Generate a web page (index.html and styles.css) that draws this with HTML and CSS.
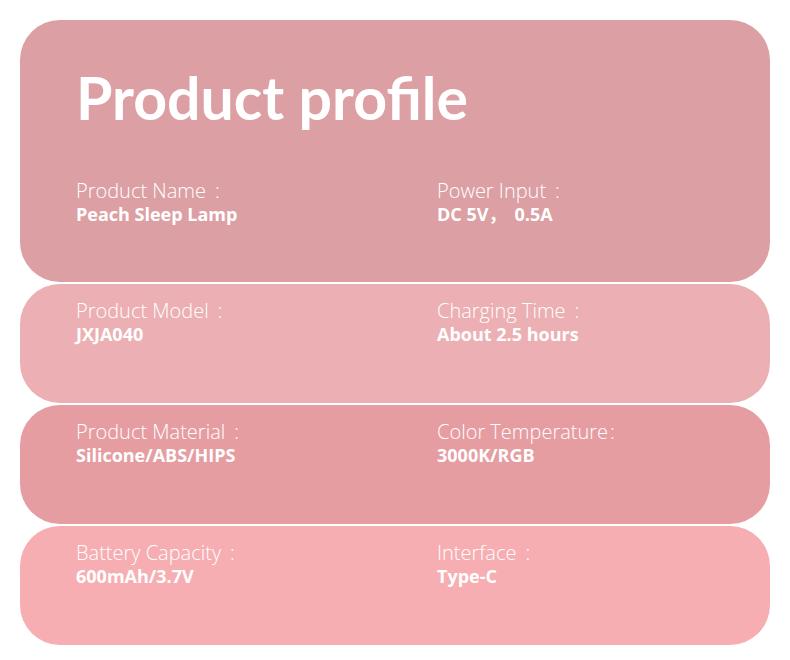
FILE: index.html
```html
<!DOCTYPE html>
<html>
<head>
<meta charset="utf-8">
<link rel="stylesheet" href="styles.css">
</head>
<body>
<div class="page">
  <section class="card card-1">
    <h1 class="title">Product profile</h1>
    <div class="row">
      <div class="item"><div class="label">Product Name<span class="c">:</span></div><div class="value">Peach Sleep Lamp</div></div>
      <div class="item"><div class="label">Power Input<span class="c">:</span></div><div class="value">DC 5V，<span class="gap">0.5A</span></div></div>
    </div>
  </section>
  <section class="card card-2">
    <div class="row">
      <div class="item"><div class="label">Product Model<span class="c">:</span></div><div class="value">JXJA040</div></div>
      <div class="item"><div class="label">Charging Time<span class="c">:</span></div><div class="value">About 2.5 hours</div></div>
    </div>
  </section>
  <section class="card card-3">
    <div class="row">
      <div class="item"><div class="label">Product Material<span class="c">:</span></div><div class="value">Silicone/ABS/HIPS</div></div>
      <div class="item"><div class="label">Color Temperature<span class="c tight">:</span></div><div class="value">3000K/RGB</div></div>
    </div>
  </section>
  <section class="card card-4">
    <div class="row">
      <div class="item"><div class="label">Battery Capacity<span class="c">:</span></div><div class="value">600mAh/3.7V</div></div>
      <div class="item"><div class="label">Interface<span class="c">:</span></div><div class="value">Type-C</div></div>
    </div>
  </section>
</div>
</body>
</html>
```
FILE: styles.css
```css
html, body { margin: 0; padding: 0; background: #fff; }
body { font-family: "Open Sans", "Noto Sans CJK SC", sans-serif; color: #fff; }
.page {
  width: 750px;
  padding: 20px;
  display: flex;
  flex-direction: column;
  gap: 2px;
}
.card {
  border-radius: 40px;
  height: 119px;
  box-sizing: border-box;
  padding: 16px 0 0 56px;
}
.card-1 { background: #dc9fa4; height: 262px; padding-top: 43px; }
.card-2 { background: #ecafb3; }
.card-3 { background: #e69da2; }
.card-4 { background: #f7aeb3; }
.title {
  margin: 0 0 47px 0;
  font-family: "Lato", sans-serif;
  font-size: 59px;
  font-weight: 700;
  line-height: 70px;
}
.row { display: flex; }
.item { width: 361px; flex-shrink: 0; }
.label { font-size: 20px; font-weight: 300; line-height: 22px; }
.label .c { margin-left: 9px; }
.label .c.tight { margin-left: 2px; }
.value { font-size: 18px; font-weight: 700; line-height: 24px; }
.value .gap { margin-left: 8px; }
```
